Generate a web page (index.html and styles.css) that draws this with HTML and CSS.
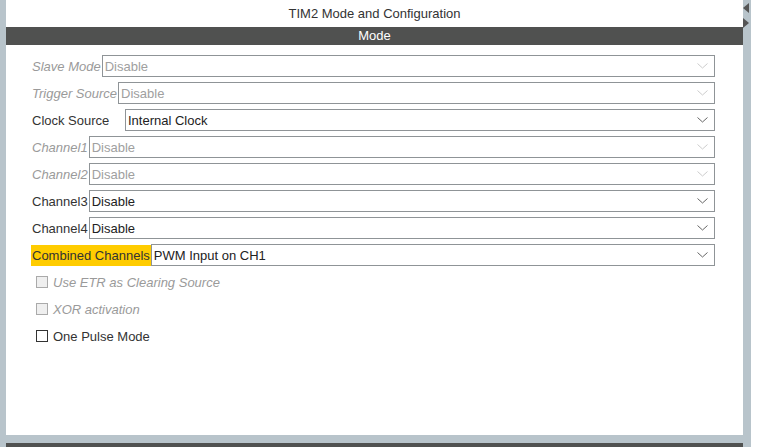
FILE: index.html
```html
<!DOCTYPE html>
<html>
<head>
<meta charset="utf-8">
<link rel="stylesheet" href="styles.css">
</head>
<body>
<div class="app">
  <div class="main">
    <div class="panel">
      <div class="title">TIM2 Mode and Configuration</div>
      <div class="section-bar">Mode</div>
      <div class="form">
        <div class="row disabled">
          <span class="label">Slave Mode</span>
          <div class="select"><span class="value">Disable</span><svg class="chev" width="11" height="6" viewBox="0 0 11 6"><path d="M0.5 0.5 L5.5 5 L10.5 0.5" fill="none" stroke="currentColor" stroke-width="1"/></svg></div>
        </div>
        <div class="row disabled">
          <span class="label">Trigger Source</span>
          <div class="select"><span class="value">Disable</span><svg class="chev" width="11" height="6" viewBox="0 0 11 6"><path d="M0.5 0.5 L5.5 5 L10.5 0.5" fill="none" stroke="currentColor" stroke-width="1"/></svg></div>
        </div>
        <div class="row">
          <span class="label label-wide">Clock Source</span>
          <div class="select"><span class="value">Internal Clock</span><svg class="chev" width="11" height="6" viewBox="0 0 11 6"><path d="M0.5 0.5 L5.5 5 L10.5 0.5" fill="none" stroke="currentColor" stroke-width="1"/></svg></div>
        </div>
        <div class="row disabled">
          <span class="label">Channel1</span>
          <div class="select"><span class="value">Disable</span><svg class="chev" width="11" height="6" viewBox="0 0 11 6"><path d="M0.5 0.5 L5.5 5 L10.5 0.5" fill="none" stroke="currentColor" stroke-width="1"/></svg></div>
        </div>
        <div class="row disabled">
          <span class="label">Channel2</span>
          <div class="select"><span class="value">Disable</span><svg class="chev" width="11" height="6" viewBox="0 0 11 6"><path d="M0.5 0.5 L5.5 5 L10.5 0.5" fill="none" stroke="currentColor" stroke-width="1"/></svg></div>
        </div>
        <div class="row">
          <span class="label">Channel3</span>
          <div class="select"><span class="value">Disable</span><svg class="chev" width="11" height="6" viewBox="0 0 11 6"><path d="M0.5 0.5 L5.5 5 L10.5 0.5" fill="none" stroke="currentColor" stroke-width="1"/></svg></div>
        </div>
        <div class="row">
          <span class="label">Channel4</span>
          <div class="select"><span class="value">Disable</span><svg class="chev" width="11" height="6" viewBox="0 0 11 6"><path d="M0.5 0.5 L5.5 5 L10.5 0.5" fill="none" stroke="currentColor" stroke-width="1"/></svg></div>
        </div>
        <div class="row">
          <span class="label label-highlight">Combined Channels</span>
          <div class="select"><span class="value">PWM Input on CH1</span><svg class="chev" width="11" height="6" viewBox="0 0 11 6"><path d="M0.5 0.5 L5.5 5 L10.5 0.5" fill="none" stroke="currentColor" stroke-width="1"/></svg></div>
        </div>
        <div class="check-row disabled">
          <span class="box"></span><span class="check-label">Use ETR as Clearing Source</span>
        </div>
        <div class="check-row disabled">
          <span class="box"></span><span class="check-label">XOR activation</span>
        </div>
        <div class="check-row">
          <span class="box"></span><span class="check-label">One Pulse Mode</span>
        </div>
      </div>
    </div>
    <div class="footer"></div>
  </div>
  <div class="strip">
    <span class="arrow arrow-left"></span>
    <span class="arrow arrow-right"></span>
  </div>
</div>
</body>
</html>
```
FILE: styles.css
```css
html, body {
  margin: 0;
  padding: 0;
  background: #ffffff;
}
body {
  font-family: "Liberation Sans", Arial, sans-serif;
  font-size: 13px;
  color: #333333;
}
.app {
  display: flex;
  width: 751px;
  height: 447px;
  background: #b8c4cb;
  padding-left: 6px;
  box-sizing: border-box;
}
.main {
  width: 737px;
  display: flex;
  flex-direction: column;
}
.panel {
  height: 435px;
  background: #ffffff;
  display: flex;
  flex-direction: column;
}
.footer {
  margin-top: 8px;
  flex: 1;
  background: #505150;
}
.strip {
  width: 8px;
  display: flex;
  flex-direction: column;
  padding-top: 3px;
  gap: 5px;
}
.arrow {
  width: 0;
  height: 0;
  border-top: 5px solid transparent;
  border-bottom: 5px solid transparent;
}
.arrow-left {
  border-right: 6px solid #555555;
}
.arrow-right {
  border-left: 6px solid #555555;
}
.title {
  height: 27px;
  line-height: 27px;
  text-align: center;
  color: #333333;
}
.section-bar {
  height: 18px;
  line-height: 18px;
  background: #505150;
  color: #ffffff;
  text-align: center;
}
.form {
  display: flex;
  flex-direction: column;
  gap: 5px;
  padding: 10px 28px 0 25px;
}
.row {
  display: flex;
  align-items: stretch;
  height: 22px;
}
.label {
  display: flex;
  align-items: center;
  padding: 0 1px 0 1px;
  white-space: nowrap;
  color: #333333;
}
.label-wide {
  width: 94px;
  box-sizing: border-box;
}
.label-highlight {
  background: #ffcc00;
  margin-top: 1px;
}
.select {
  flex: 1;
  display: flex;
  align-items: center;
  justify-content: space-between;
  border: 1px solid #8f9497;
  box-sizing: border-box;
  padding: 0 6px 0 2px;
  color: #222222;
}
.chev {
  color: #666666;
}
.row.disabled .label {
  font-style: italic;
  color: #9a9a9a;
}
.row.disabled .value {
  color: #a0a0a0;
}
.row.disabled .chev {
  color: #cccccc;
}
.check-row {
  display: flex;
  align-items: center;
  height: 22px;
  padding-left: 5px;
  gap: 5px;
}
.box {
  width: 12px;
  height: 12px;
  box-sizing: border-box;
  border: 1px solid #333333;
  background: #ffffff;
}
.check-row.disabled .box {
  border-color: #aaaaaa;
  background: #efefef;
}
.check-row.disabled .check-label {
  font-style: italic;
  color: #9a9a9a;
}
```
